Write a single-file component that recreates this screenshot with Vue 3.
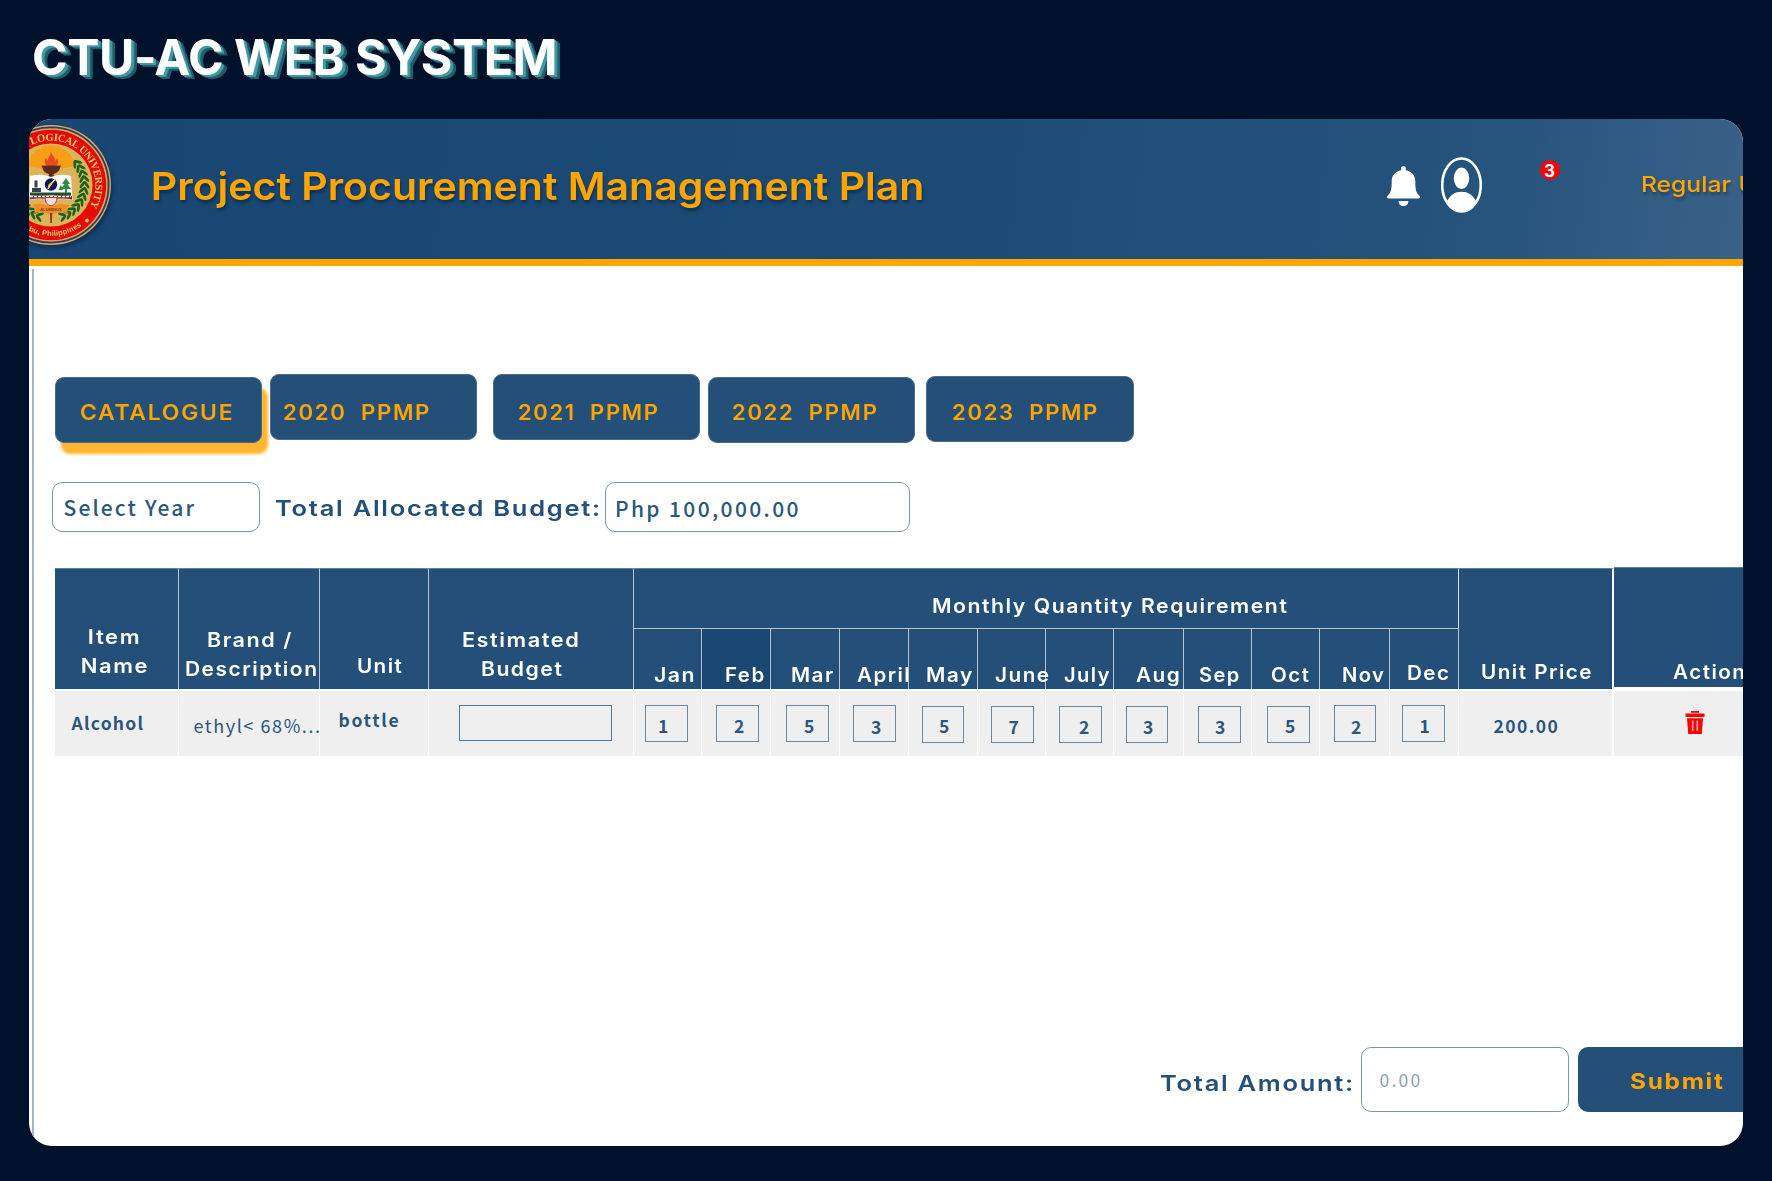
<script setup>
// Fits a label's visible glyphs to the given width: by letter spacing,
// or with the .wide modifier by widening the letters themselves.
const pen = document.createElement('canvas').getContext('2d')
const vSpan = {
  mounted(el, { value, modifiers }) {
    const cs = getComputedStyle(el)
    const text = el.textContent
    pen.font = `${cs.fontWeight} ${cs.fontSize} ${cs.fontFamily}`
    const m = pen.measureText(text)
    const ink = m.actualBoundingBoxLeft + m.actualBoundingBoxRight
    if (modifiers.wide) {
      const spacing = parseFloat(cs.letterSpacing) || 0
      el.style.transform = `scaleX(${value / (ink + spacing * (text.length - 1))})`
    } else if (text.length > 1) {
      el.style.letterSpacing = `${(value - ink) / (text.length - 1)}px`
    }
    el.style.textIndent = `${m.actualBoundingBoxLeft}px`
  },
}

const nb = '\u00a0'
const tabs = [
  { label: 'CATALOGUE', gap: 0, top: 3, pad: 25, width: 150.5, active: true },
  { label: `2020${nb}${nb}PPMP`, gap: 7.5, top: 0, pad: 13.5, width: 144.5 },
  { label: `2021${nb}${nb}PPMP`, gap: 15.5, top: 0, pad: 25, width: 138 },
  { label: `2022${nb}${nb}PPMP`, gap: 7.5, top: 3, pad: 24, width: 143 },
  { label: `2023${nb}${nb}PPMP`, gap: 11, top: 2, pad: 26, width: 143.5 },
]

const columns = [
  { w: 124, pb: 8, lines: [['Item', 33.5, 50], ['Name', 27, 65]] },
  { w: 141, pb: 5, lines: [['Brand /', 28.5, 84], ['Description', 6.5, 130]] },
  { w: 109, pb: 8, lines: [['Unit', 38, 44]] },
  { w: 205, pb: 5, lines: [['Estimated', 34, 114.5], ['Budget', 52.5, 80]] },
]

const months = [
  { name: 'Jan', w: 68, x: 19.5, tw: 39.5, qty: 1, bx: 11, bw: 43, by: 0, dx: 14, dy: 0 },
  { name: 'Feb', w: 69, x: 23.5, tw: 38, qty: 2, bx: 14, bw: 43, by: 0, dx: 18, dy: 0 },
  { name: 'Mar', w: 69, x: 21, tw: 41.5, qty: 5, bx: 15, bw: 43, by: 0, dx: 18, dy: 0 },
  { name: 'April', w: 69, x: 17, tw: 51.5, qty: 3, bx: 13, bw: 43, by: 0, dx: 18, dy: 1 },
  { name: 'May', w: 69, x: 18, tw: 46, qty: 5, bx: 13, bw: 42, by: 1, dx: 17, dy: 0 },
  { name: 'June', w: 68, x: 16.5, tw: 53.5, qty: 7, bx: 13, bw: 43, by: 1, dx: 17.5, dy: 1 },
  { name: 'July', w: 68, x: 18, tw: 46, qty: 2, bx: 13, bw: 43, by: 1, dx: 20, dy: 1 },
  { name: 'Aug', w: 70, x: 21.5, tw: 42.5, qty: 3, bx: 12, bw: 42, by: 1, dx: 17, dy: 1 },
  { name: 'Sep', w: 68, x: 15, tw: 40, qty: 3, bx: 14, bw: 43, by: 1, dx: 17, dy: 1.5 },
  { name: 'Oct', w: 68, x: 19, tw: 38, qty: 5, bx: 15, bw: 43, by: 1, dx: 18, dy: 0.5 },
  { name: 'Nov', w: 70, x: 22.5, tw: 41.5, qty: 2, bx: 14, bw: 42, by: 0, dx: 17, dy: 1 },
  { name: 'Dec', w: 69, x: 18, tw: 40.5, qty: 1, bx: 12, bw: 43, by: 0, dx: 18.5, dy: 0, lift: 2 },
]

const rays = [-72, -54, -36, -18, 0, 18, 36, 54, 72]
const leaves = [128, 118, 108, 98, 88, 78, 68, 58, 48, 38, 28, 18]
</script>

<template>
  <div class="page">
    <h1 class="site"><span v-span.wide="521">CTU-AC WEB SYSTEM</span></h1>

    <main class="panel">
      <header class="bar">
        <svg class="seal" viewBox="0 0 120 120">
          <defs>
            <path id="seal-top" d="M40.7 19.8 A44.6 44.6 0 0 1 97.2 84.3" />
            <path id="seal-foot" d="M37.5 105.5 A51 51 0 0 0 93.5 98.6" />
          </defs>
          <circle cx="60" cy="60" r="60" fill="#d0ad5c" />
          <circle cx="60" cy="60" r="57.6" fill="none" stroke="#3a3564" stroke-width="1.8" />
          <circle cx="60" cy="60" r="55.2" fill="#e60a05" />
          <circle cx="60" cy="60" r="41.6" fill="#dcb358" />
          <g fill="#f99d14">
            <path v-for="a in rays" :key="a" :transform="`rotate(${a} 60 45)`" d="M58.5 38 L56.5 21 Q60 19.500 63.500 21 L61.500 38Z" />
          </g>
          <g fill="#17641b">
            <g v-for="a in leaves" :key="a">
              <g :transform="`rotate(${-a + 90} 60 60) translate(93.500 60)`">
                <ellipse cx="-2.600" cy="0" rx="1.400" ry="4.200" transform="rotate(35)" />
                <ellipse cx="2.600" cy="0" rx="1.400" ry="4.200" transform="rotate(-35)" />
              </g>
              <g :transform="`rotate(${a + 90} 60 60) translate(93.500 60)`">
                <ellipse cx="-2.600" cy="0" rx="1.400" ry="4.200" transform="rotate(-35)" />
                <ellipse cx="2.600" cy="0" rx="1.400" ry="4.200" transform="rotate(35)" />
              </g>
            </g>
          </g>
          <path d="M60 27c1 4 4.500 5 4 8.500 1.500 0 2-2 2-3 2 4 1 7.500-2 8.500h-7.500c-3-1.500-3.500-5-1.500-8 .5 1.500 1 2.500 2 2.500-.5-3 2.500-5 3-8.500z" fill="#e94a22" />
          <path d="M50.500 40.500h19.500l-1.500 4q-1.500 3-6 4.500l1 6h-6.500l1-6q-5-1.500-6-4.500z" fill="#5d2a1c" />
          <path d="M39 51q11-3 21 1 10-4 20-1l1.500 24q-11-2-21.500.5-10-2.500-22-.5z" fill="#fff" />
          <path d="M39 71q11-2 21 .5 10-2.500 21-.5v3.500q-11-2-21.500.5-10-2.500-21-.5z" fill="#7b2b35" />
          <path d="M39 67.500h41v3H39z" fill="#254e2c" />
          <path d="M39 71.500h41" stroke="#fff" stroke-width="1.500" stroke-dasharray="3 1" />
          <path d="M41 63h9v4h-9zM43.500 55.500h3v7h-3z" fill="#36424a" />
          <path d="M75 53l4 6h-2.500l3.500 5h-4v4h-2v-4h-4l3.500-5H71zM70 60l2.500 5h-5z" fill="#2b8b46" />
          <circle cx="60" cy="59.500" r="6.200" fill="#11145e" />
          <path d="M64 54.500l-3 4-4 5.500 1-4.500z" fill="#e5e332" stroke="#e5e332" />
          <path d="M54 72.500h12q0 7-6 8.500-6-1.500-6-8.500z" fill="#f4dada" stroke="#b33740" />
          <path d="M41 80q8-2 10-1 9 4 18 0l10 1-4 4 2 4-9-1q-8 4-17 0l-8 1 2-4z" fill="#f48b22" />
          <path d="M58.900 88h2.400l-.4 10h-1.600z" fill="#8a3f1d" />
          <text x="60" y="86" text-anchor="middle" class="motto">ALUMINOS</text>
          <text class="seal-name"><textPath href="#seal-top" textLength="112">LOGICAL UNIVERSITY</textPath></text>
          <text class="seal-place"><textPath href="#seal-foot" textLength="56">bu, Philippines</textPath></text>
          <circle cx="96" cy="95.500" r="1.900" fill="#f4cf6a" />
        </svg>

        <h2 class="title"><span v-span.wide="769">Project Procurement Management Plan</span></h2>

        <svg class="bell" viewBox="0 0 33 40">
          <path d="M16.500 0c1.500 0 2.300 1 2.300 2.300v2c6 1.200 9.500 5.200 9.500 11.200 0 8 .8 11.500 4.300 14.500.8 1 .2 2.400-1.200 2.400H1.600C.2 32.400-.4 31 .4 30c3.500-3 4.300-6.500 4.300-14.500 0-6 3.500-10 9.500-11.200v-2C14.200 1 15 0 16.500 0zM11.600 34.900h9.800c0 3-2 5.100-4.900 5.100s-4.900-2.100-4.900-5.100z" fill="#fff" />
        </svg>
        <svg class="person" viewBox="0 0 41 56">
          <ellipse cx="20.500" cy="28" rx="19.300" ry="26.500" fill="none" stroke="#fff" stroke-width="2.600" />
          <ellipse cx="20.500" cy="21.300" rx="7.700" ry="10.800" fill="#fff" />
          <path d="M6 44.500C9 38 14 34.800 20.500 34.800S32 38 35 44.500C31.500 51.500 26.500 55 20.500 55S9.500 51.500 6 44.500z" fill="#fff" />
        </svg>
        <span class="badge">3</span>
        <div class="role"><span v-span.wide="89.5">Regular</span><span>User</span></div>
      </header>

      <section class="body">
        <nav class="tabs">
          <div
            v-for="t in tabs"
            :key="t.label"
            class="tab"
            :class="{ active: t.active }"
            :style="{ marginLeft: t.gap + 'px', marginTop: t.top + 'px', paddingLeft: t.pad + 'px', paddingTop: 5 - t.top + 'px' }"
          ><span v-span.wide="t.width">{{ t.label }}</span></div>
        </nav>

        <div class="filters">
          <div class="field year"><span v-span="131">Select Year</span></div>
          <div class="caption allocated"><span v-span.wide="324">Total Allocated Budget:</span></div>
          <div class="field budget"><span v-span="180.5">Php 100,000.00</span></div>
        </div>

        <div class="thead">
          <div v-for="(c, i) in columns" :key="i" class="th" :style="{ width: c.w + 'px', paddingBottom: c.pb + 'px' }">
            <div v-for="l in c.lines" :key="l[0]" class="line" :style="{ marginLeft: l[1] + 'px' }"><span v-span.wide="l[2]">{{ l[0] }}</span></div>
          </div>
          <div class="monthly">
            <div class="group"><span v-span.wide="354">Monthly Quantity Requirement</span></div>
            <div class="months">
              <div
                v-for="m in months"
                :key="m.name"
                class="month"
                :class="{ hot: m.name === 'Feb', cut: m.name === 'April' }"
                :style="{ width: m.w + 'px', paddingLeft: m.x + 'px', paddingBottom: (m.lift || 0) + 'px' }"
              ><span v-span.wide="m.tw">{{ m.name }}</span></div>
            </div>
          </div>
          <div class="th price"><div class="line"><span v-span.wide="109">Unit Price</span></div></div>
          <div class="th action"><div class="line"><span v-span.wide="71">Action</span></div></div>
        </div>

        <div class="trow">
          <div class="td item"><span v-span="73">Alcohol</span></div>
          <div class="td brand"><span v-span="125.5">ethyl&lt; 68%...</span></div>
          <div class="td unit"><span v-span="59">bottle</span></div>
          <div class="td estimate"><div class="blank"></div></div>
          <div v-for="m in months" :key="m.name" class="td" :style="{ width: m.w + 'px' }">
            <div
              class="qty"
              :style="{ marginLeft: m.bx + 'px', marginTop: 14 + m.by + 'px', width: m.bw + 'px', paddingLeft: m.dx - 1 + 'px', paddingTop: m.dy - m.by + 7 + 'px' }"
            ><span v-span="9">{{ m.qty }}</span></div>
          </div>
          <div class="td cost"><span v-span="64">200.00</span></div>
          <div class="td remove">
            <svg class="trash" viewBox="0 0 20 23">
              <path d="M6 0h8v1.800h-8z" fill="#f00" />
              <path d="M.5 2.500h19v3.500H.5z" fill="#f00" />
              <path d="M2 7.200h16l-1.200 15.800H3.200z" fill="#f00" />
              <path d="M7.700 9.500v10.500M12.300 9.500v10.500" stroke="#f3b0b0" stroke-width="1.500" />
            </svg>
          </div>
        </div>

        <div class="footer">
          <div class="caption"><span v-span.wide="192">Total Amount:</span></div>
          <div class="field amount"><span v-span="40">0.00</span></div>
          <div class="submit"><span v-span.wide="93">Submit</span></div>
        </div>
      </section>
    </main>
  </div>
</template>

<style>
body { margin: 0; background: #00122b; }
</style>

<style scoped>
* { box-sizing: border-box; }
.page {
  width: 1772px; height: 1181px; overflow: hidden;
  display: flex; flex-direction: column;
  background: #00122b;
  font-family: Inter, "Open Sans", sans-serif;
  white-space: nowrap;
}
.page span { display: block; transform-origin: 0 50%; }
.site {
  margin: 0; padding: 27px 0 0 34px; height: 119px; letter-spacing: -.5px;
  font-size: 50px; line-height: 60px; font-weight: 700; color: #fff;
  text-shadow: 1.500px 1px #4199a5, 3px 2px #4199a5, 4.500px 3px #235c69, 6px 4px #235c69;
}
.panel {
  position: relative;
  width: 1714px; height: 1027px; margin-left: 29px; flex: none;
  overflow: hidden; border-radius: 23px; background: #fff;
  display: flex; flex-direction: column;
}
.bar {
  height: 147px; flex: none; display: flex; align-items: flex-start;
  border-bottom: 7px solid #ffa500;
  background: linear-gradient(97deg, #194673 0%, #1b4a75 45%, #24517a 78%, #28557e 87%, #3a6288 100%);
}
.bar > * { flex: none; }
.seal { width: 120px; height: 120px; margin: 6px 0 0 -38px; filter: drop-shadow(2px 3px 2px rgba(0, 15, 40, .4)); }
.seal-name { font: 600 10.500px "Liberation Serif", serif; fill: #f4cf6a; }
.seal-place { font: 700 7.500px "Liberation Sans", sans-serif; fill: #f4cf6a; }
.motto { font: 700 4px "Liberation Sans", sans-serif; fill: #79411a; }
.title {
  margin: 45px 0 0 42px; width: 790px; font-size: 38px; line-height: 44px; font-weight: 600;
  color: #ffa500; text-shadow: 1px 3px 3px rgba(0, 20, 45, .45);
}
.bell { width: 33px; height: 40px; margin: 47px 0 0 443.500px; }
.person { width: 41px; height: 56px; margin: 37.500px 0 0 21px; }
.badge {
  width: 20px; height: 20px; margin: 41px 0 0 58px; border-radius: 50%;
  background: #f00; color: #fff; text-align: center;
  font-size: 17px; line-height: 22px; font-weight: 700;
}
.role {
  display: flex; gap: 8px; margin: 51px 0 0 82px; font-size: 22px; line-height: 28px; font-weight: 500;
  color: #ffa500; text-shadow: 1px 3px 3px rgba(0, 20, 45, .4);
}
.role span:first-child { width: 89px; }
.body {
  flex: 1; margin: 3px 0 0 3px; border-left: 2px solid #a3b4c6;
  display: flex; flex-direction: column;
}
.tabs { display: flex; align-items: flex-start; margin: 104.500px 0 0 20.500px; height: 108px; letter-spacing: 1.600px; }
.tab {
  width: 207.500px; height: 66px; border-radius: 9px; flex: none;
  background: #234f78; color: #ffa500;
  font-size: 21.500px; font-weight: 600;
  border: 1px solid #4a6c8f;
}
.tab span { line-height: 64px; }
.tab.active { box-shadow: 6px 11px 3px #ffb52e; }
.filters { display: flex; align-items: flex-start; margin-left: 18px; height: 86px; }
.field {
  border: 1.500px solid #7c96b1; border-radius: 10px; background: #fff; color: #2a567f; flex: none;
  font-family: "Noto Sans CJK SC", "Noto Sans", sans-serif; font-size: 21px; font-weight: 500;
}
.year { width: 208px; height: 50px; padding-left: 10.500px; line-height: 48px; }
.budget { width: 305px; height: 50px; padding-left: 11px; line-height: 50px; }
.caption { font-size: 22px; line-height: 50px; font-weight: 600; color: #234f78; letter-spacing: 1.500px; flex: none; }
.allocated { width: 330px; margin: 1px 0 0 15px; }
.thead {
  display: flex; margin-left: 21px; height: 121px; flex: none;
  color: #fff; font-size: 19.500px; font-weight: 600; letter-spacing: 1.400px;
}
.th {
  display: flex; flex-direction: column; justify-content: flex-end; flex: none;
  background: #234f78; border-right: 1px solid #b5c3d1; border-top: 1px solid #5f7e9c; line-height: 28.700px;
}
.monthly { width: 825px; display: flex; flex-direction: column; flex: none; }
.group {
  height: 60px; padding: 7px 0 0 299px; background: #234f78; line-height: 60px;
  border-top: 1px solid #5f7e9c; border-right: 1px solid #dbe2e9;
}
.months { display: flex; flex: 1; border-top: 1px solid #b5c3d1; }
.month {
  display: flex; align-items: flex-end; flex: none; line-height: 27px;
  background: #234f78; border-right: 1px solid #b5c3d1;
}
.month span { position: relative; z-index: 1; }
.hot { background: #1a4873; }
.cut { overflow: hidden; }
.price { width: 155px; padding: 0 0 2px 22.500px; border-right: 2px solid #fff; }
.action { width: 132px; height: 120px; margin-top: -1px; padding: 0 0 0 59px; }
.trow {
  display: flex; margin: 2px 0 0 21px; height: 65px; flex: none;
  font-family: "Noto Sans CJK SC", "Noto Sans", sans-serif; font-size: 17.500px; font-weight: 700; color: #2a567f;
}
.td { background: #efefef; border-right: 1px solid #fff; flex: none; line-height: 26px; }
.item { width: 124px; padding: 19px 0 0 15.500px; }
.brand { width: 141px; padding: 21px 0 0 14.500px; font-weight: 400; font-size: 18px; }
.unit { width: 109px; padding: 16px 0 0 19.500px; }
.estimate { width: 205px; }
.blank { width: 153px; height: 36px; margin: 14px 0 0 30px; border: 1px solid #54779a; }
.qty { height: 37px; border: 1.500px solid #6b89a6; }
.cost { width: 155px; padding: 22px 0 0 34.500px; border-right: 2px solid #fff; }
.remove { width: 132px; }
.trash { display: block; width: 20px; height: 23px; margin: 20px 0 0 71px; }
.footer { display: flex; margin: 291px 0 0 1126px; }
.footer .caption { width: 201px; line-height: 72px; }
.amount { width: 207.500px; height: 65px; padding-left: 17.500px; font-size: 17.500px; line-height: 64px; font-weight: 400; color: #8aa0b8; }
.submit {
  width: 200px; height: 65px; margin-left: 9.500px; padding-left: 52px; flex: none; border-radius: 10px;
  background: #234f78; color: #ffa500; font-size: 21.500px; line-height: 68px; font-weight: 700; letter-spacing: 1.500px;
}
</style>
